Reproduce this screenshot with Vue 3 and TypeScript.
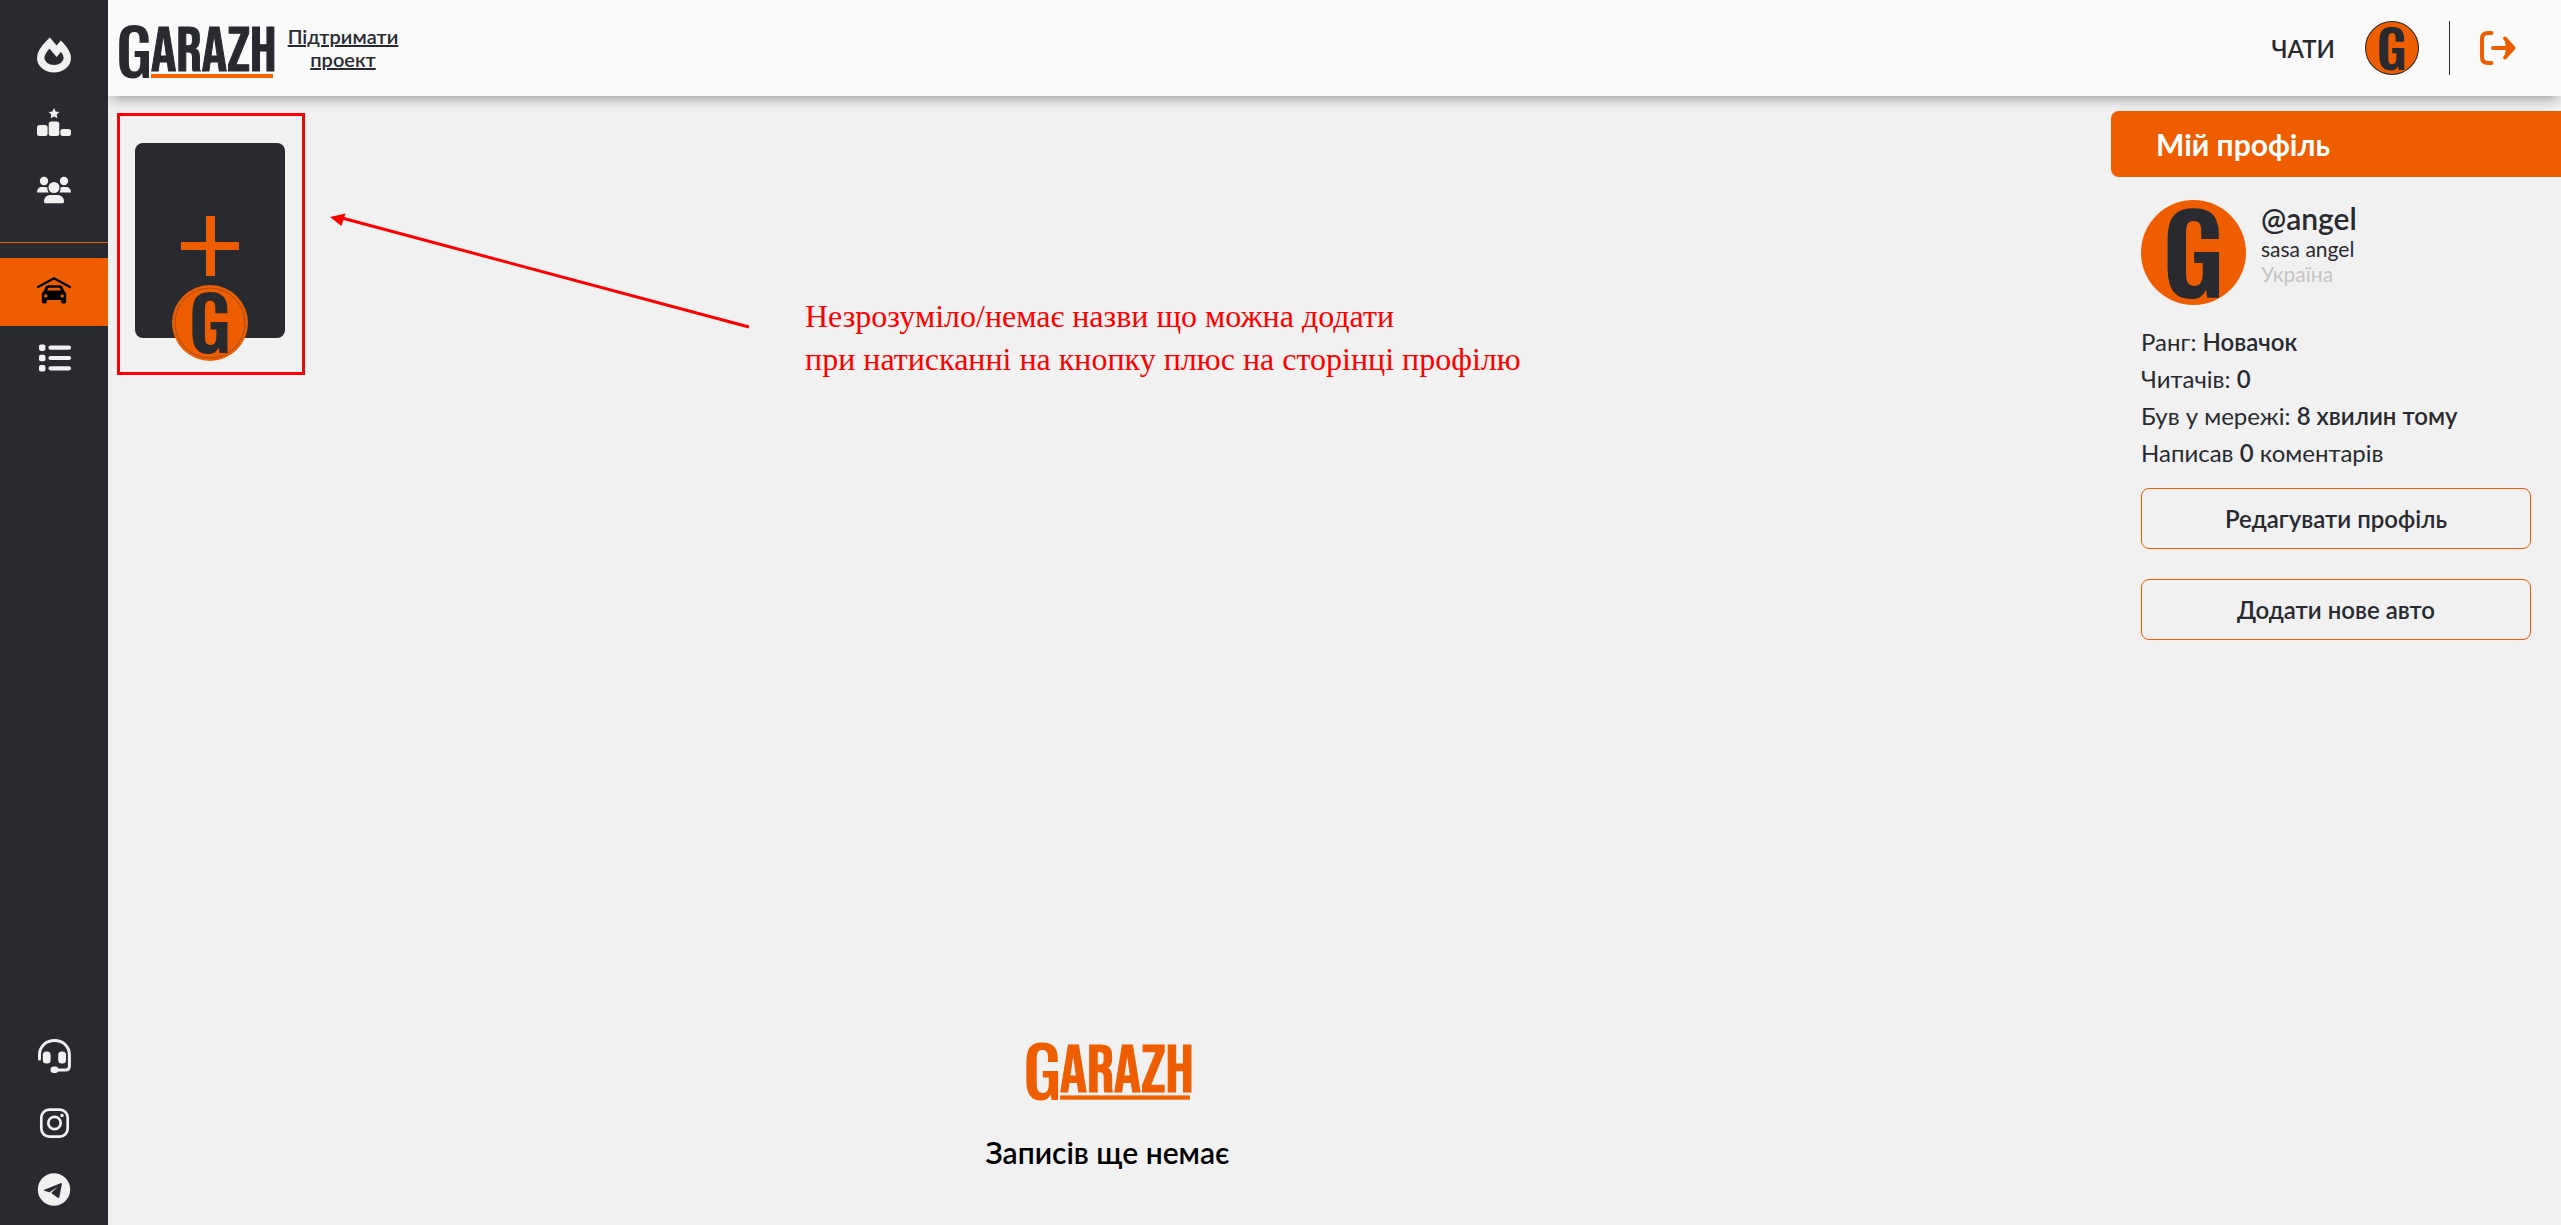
<script setup lang="ts">
interface Fact {
  before: string
  value: string
  after: string
}

const facts: Fact[] = [
  { before: 'Ранг: ', value: 'Новачок', after: '' },
  { before: 'Читачів: ', value: '0', after: '' },
  { before: 'Був у мережі: ', value: '8 хвилин тому', after: '' },
  { before: 'Написав ', value: '0', after: ' коментарів' },
]

const actions: string[] = ['Редагувати профіль', 'Додати нове авто']
</script>

<template>
  <div class="page">
    <nav class="sidebar">
      <div class="group">
        <a class="item" href="#feed" aria-label="Стрічка">
          <svg viewBox="0 0 34 34" fill="none" stroke="#f1f1f1" stroke-width="7.4">
            <path d="M12.6 5C8 9.500 3.700 14.500 3.700 20A13.200 10.600 0 0 0 30.300 20C30.300 15.500 27.500 11.800 24 8L19.600 13.200Z" />
          </svg>
        </a>
        <a class="item" href="#rating" aria-label="Рейтинг">
          <svg viewBox="0 0 34 34" fill="#f1f1f1">
            <path d="M17 3l1.700 3.400 3.600.5-2.600 2.600.7 3.700-3.400-1.800-3.400 1.800.7-3.700L11.700 6.900l3.600-.5z" />
            <rect x="0" y="20" width="10.600" height="11" rx="2.500" />
            <rect x="11.700" y="16.500" width="10.600" height="14.500" rx="2.500" />
            <rect x="23.400" y="24" width="10.600" height="7" rx="2.500" />
          </svg>
        </a>
        <a class="item" href="#people" aria-label="Спільнота">
          <svg viewBox="0 0 34 34" fill="#f1f1f1">
            <circle cx="7" cy="9" r="4.200" />
            <circle cx="27" cy="9" r="4.200" />
            <circle cx="17" cy="15.500" r="5.500" />
            <path d="M0 20.500c0-3.500 2-5.500 5-5.500h3.500c1 0 1.600.2 2 .6-.3 2 .2 3.700 1.200 4.900z" />
            <path d="M34 20.500c0-3.500-2-5.500-5-5.500h-3.500c-1 0-1.600.2-2 .6.3 2-.2 3.700-1.200 4.900z" />
            <path d="M7 29.500c0-4 3-6.500 6.500-6.500h7c3.500 0 6.500 2.500 6.500 6.500 0 1.200-.6 1.800-1.700 1.800H8.700C7.600 31.300 7 30.700 7 29.500z" />
          </svg>
        </a>
      </div>
      <div class="group own">
        <a class="item active" href="#garage" aria-label="Гараж">
          <svg viewBox="0 0 34 34" fill="#000">
            <path d="M1 14L17 5.200 33 14" fill="none" stroke="#000" stroke-width="2.200" stroke-linecap="round" stroke-linejoin="round" />
            <path fill-rule="evenodd" d="M11.500 12.200h11c1.800 0 2.800.8 3.400 2.400l1.300 3.400c1.300.8 2 2 2 3.600v7.200c0 1-.7 1.700-1.600 1.700h-1.800c-1 0-1.700-.7-1.700-1.700V27H9.900v1.800c0 1-.7 1.700-1.700 1.700H6.400c-.9 0-1.600-.7-1.600-1.700v-7.200c0-1.600.7-2.800 2-3.600l1.300-3.400c.6-1.600 1.600-2.400 3.400-2.400zM10.200 17.600h13.600l-.9-2.200c-.2-.5-.5-.7-1-.7h-9.800c-.5 0-.8.2-1 .7zM8.800 21.200a1.700 1.700 0 1 0 0 3.400 1.700 1.700 0 0 0 0-3.400zM25.200 21.200a1.700 1.700 0 1 0 0 3.400 1.700 1.700 0 0 0 0-3.400z" />
          </svg>
        </a>
        <a class="item" href="#list" aria-label="Список">
          <svg viewBox="0 0 34 34" fill="#f1f1f1">
            <rect x="2" y="3.500" width="6.400" height="6.400" rx="1.800" />
            <rect x="2" y="13.800" width="6.400" height="6.400" rx="1.800" />
            <rect x="2" y="24.100" width="6.400" height="6.400" rx="1.800" />
            <path d="M13.500 6.700h18.500M13.500 17h18.500M13.500 27.300h18.500" stroke="#f1f1f1" stroke-width="4.200" stroke-linecap="round" />
          </svg>
        </a>
      </div>
      <div class="group links">
        <a class="item" href="#support" aria-label="Підтримка">
          <svg viewBox="0 0 34 34" fill="#f1f1f1">
            <path d="M2.500 20v-4C2.500 8 8.500 1.600 17.500 1.600S32.400 8 32.400 16v11c0 2.500-1.400 4-4 4H19" fill="none" stroke="#f1f1f1" stroke-width="3" stroke-linecap="round" />
            <rect x="5.800" y="12.500" width="7.800" height="12" rx="3.500" />
            <rect x="21.200" y="12.500" width="7.800" height="12" rx="3.500" />
            <rect x="13.500" y="27.600" width="8" height="6.400" rx="3.200" />
          </svg>
        </a>
        <a class="item" href="#instagram" aria-label="Instagram">
          <svg viewBox="0 0 34 34" fill="none" stroke="#f1f1f1" stroke-width="2.700">
            <rect x="4.300" y="3.600" width="26.400" height="27" rx="8" />
            <circle cx="17.500" cy="17" r="6.200" />
            <circle cx="25" cy="9.500" r="1.700" fill="#f1f1f1" stroke="none" />
          </svg>
        </a>
        <a class="item" href="#telegram" aria-label="Telegram">
          <svg viewBox="0 0 34 34">
            <circle cx="17" cy="16.500" r="16.200" fill="#f1f1f1" />
            <path d="M7.300 16.800L23.600 10.200c.9-.3 1.400.1 1.200 1.200L22.300 24.200c-.2.900-.8 1.100-1.500.6L14.800 20.400c-.4-.3-.4-.7 0-1.100l6-5.400-8 5c-.5.300-1 .3-1.500.1l-4-1.300c-.8-.3-.8-.6 0-.9z" fill="#282a2f" />
          </svg>
        </a>
      </div>
    </nav>

    <div class="content">
      <header class="topbar">
        <a class="brand" href="#home" aria-label="Garazh">
          <svg class="wordmark" viewBox="0 0 156 56">
            <text class="cap" x="-2" y="54">G</text>
            <text class="rest" x="33" y="47">ARAZH</text>
            <rect x="33" y="50" width="122" height="4" />
          </svg>
        </a>
        <a class="support" href="#donate">Підтримати проект</a>
        <a class="chats" href="#chats">ЧАТИ</a>
        <a class="me" href="#me" aria-label="Профіль">
          <svg viewBox="0 0 100 100">
            <circle cx="50" cy="50" r="49" fill="#ee5d00" stroke="#282a2f" stroke-width="2" />
            <text class="mark" x="50" y="91">G</text>
          </svg>
        </a>
        <button class="logout" type="button" aria-label="Вийти">
          <svg viewBox="0 0 36 34" fill="none" stroke="#ee5d00" stroke-width="4" stroke-linecap="round" stroke-linejoin="round">
            <path d="M11.500 2H8Q2 2 2 8V26Q2 32 8 32H11.500M13 17H31" />
            <path d="M24.500 7L34 17L24.500 27L26 17Z" stroke="none" fill="#ee5d00" />
            <path d="M25 7.500L33.500 17L25 26.500" />
          </svg>
        </button>
      </header>

      <div class="columns">
        <main class="feed">
          <button class="add" type="button" aria-label="Додати">
            <svg class="plus" viewBox="0 0 58 60" fill="#ee5d00">
              <rect x="25" y="0" width="9" height="60" />
              <rect x="0" y="26" width="58" height="8" />
            </svg>
            <svg class="badge" viewBox="0 0 100 100">
              <circle cx="50" cy="50" r="50" fill="#ee5d00" />
              <circle cx="50" cy="50" r="46" fill="none" stroke="#8a4a22" stroke-width="1" />
              <text class="mark" x="50" y="90">G</text>
            </svg>
          </button>

          <div class="empty">
            <svg class="wordmark plain" viewBox="0 0 156 56">
              <text class="cap" x="-2" y="54">G</text>
              <text class="rest" x="33" y="47">ARAZH</text>
              <rect x="33" y="50" width="122" height="4" />
            </svg>
            <p>Записів ще немає</p>
          </div>

          <div class="frame"></div>
          <svg class="arrow" viewBox="0 0 420 116">
            <path d="M12 5L419 114" stroke="#f00" stroke-width="3" />
            <path d="M0 4L15.500 0.500L11.500 13Z" fill="#f00" />
          </svg>
          <p class="note">Незрозуміло/немає назви що можна додати<br>при натисканні на кнопку плюс на сторінці профілю</p>
        </main>

        <aside class="profile">
          <h2>Мій профіль</h2>
          <div class="details">
            <div class="person">
              <svg class="avatar" viewBox="0 0 100 100">
                <circle cx="50" cy="50" r="50" fill="#ee5d00" />
                <text class="mark big" x="50" y="93">G</text>
              </svg>
              <div class="names">
                <strong>@angel</strong>
                <span>sasa angel</span>
                <span class="country">Україна</span>
              </div>
            </div>
            <ul class="facts">
              <li v-for="fact in facts" :key="fact.before">{{ fact.before }}<b>{{ fact.value }}</b>{{ fact.after }}</li>
            </ul>
            <div class="actions">
              <button v-for="action in actions" :key="action" type="button">{{ action }}</button>
            </div>
          </div>
        </aside>
      </div>
    </div>
  </div>
</template>

<style>
body {
  background: #f1f1f1;
}
</style>

<style scoped>
.page {
  display: flex;
  min-height: 100vh;
  font-family: Lato, "Open Sans", sans-serif;
  color: #282a2f;
  background: #f1f1f1;
}

.page * {
  box-sizing: border-box;
}

svg {
  display: block;
  overflow: visible;
}

a {
  color: inherit;
}

button {
  font: inherit;
  color: inherit;
  cursor: pointer;
}

.sidebar {
  display: flex;
  flex-direction: column;
  flex: none;
  width: 108px;
  padding: 21px 0 2px;
  background: #282a2f;
  position: relative;
  z-index: 2;
}

.item {
  display: flex;
  align-items: center;
  justify-content: center;
  height: 67px;
}

.item svg {
  width: 34px;
  height: 34px;
}

.own {
  margin-top: 20px;
  padding-top: 15px;
  border-top: 1px solid #ee5d00;
}

.own .item {
  padding-bottom: 4px;
}

.own .active {
  height: 68px;
  background: #ee5d00;
}

.links {
  margin-top: auto;
}

.content {
  display: flex;
  flex-direction: column;
  flex: 1;
  min-width: 0;
}

.topbar {
  display: flex;
  align-items: center;
  height: 96px;
  padding: 0 45px 0 10px;
  background: #fafafa;
  box-shadow: 0 6px 12px -3px rgba(0, 0, 0, 0.35);
  position: relative;
  z-index: 1;
}

.brand {
  padding-top: 8px;
}

.wordmark {
  width: 156px;
  height: 56px;
  fill: #282a2f;
  font-family: "Bebas Neue", Oswald, "Roboto Condensed", sans-serif;
  font-weight: 400;
}

.wordmark .cap {
  font-family: Oswald, "Bebas Neue", "Roboto Condensed", sans-serif;
  font-size: 65px;
  font-weight: 500;
}

.wordmark .rest {
  font-size: 63px;
  stroke: #282a2f;
  stroke-width: 1px;
}

.wordmark rect {
  fill: #f96400;
}

.plain,
.plain rect {
  fill: #ee5d00;
}

.plain .rest {
  stroke: #ee5d00;
}

.mark {
  fill: #282a2f;
  font-family: Oswald, "Bebas Neue", "Roboto Condensed", sans-serif;
  font-size: 98px;
  font-weight: 600;
  text-anchor: middle;
}

.big {
  font-size: 104px;
}

.support {
  width: 112px;
  margin-left: 13px;
  font-size: 20px;
  font-weight: 600;
  line-height: 23px;
  text-align: center;
}

.chats {
  margin-left: auto;
  font-size: 24px;
  font-weight: 600;
  text-decoration: none;
}

.me {
  margin-left: 30px;
}

.me svg {
  width: 54px;
  height: 54px;
}

.logout {
  display: flex;
  align-items: center;
  height: 54px;
  margin-left: 30px;
  padding: 0 0 0 30px;
  border: 0;
  border-left: 1px solid #282a2f;
  background: none;
}

.logout svg {
  width: 36px;
  height: 34px;
}

.columns {
  display: flex;
  flex: 1;
}

.feed {
  display: flex;
  flex-direction: column;
  flex: 1;
  min-width: 0;
  padding: 47px 4px 53px 0;
  position: relative;
}

.add {
  display: flex;
  justify-content: center;
  width: 150px;
  height: 195px;
  margin-left: 27px;
  padding: 73px 0 0;
  border: 0;
  border-radius: 8px;
  background: #282a2f;
  position: relative;
}

.plus {
  width: 58px;
  height: 60px;
}

.badge {
  position: absolute;
  left: 37px;
  bottom: -23px;
  width: 76px;
  height: 76px;
}

.empty {
  display: flex;
  flex-direction: column;
  align-items: center;
  margin-top: auto;
}

.empty .wordmark {
  width: 166px;
  height: 60px;
}

.empty p {
  margin: 30px 0 0;
  font-size: 30px;
  font-weight: 600;
  line-height: 40px;
  color: #000;
}

.frame {
  position: absolute;
  left: 9px;
  top: 17px;
  width: 188px;
  height: 262px;
  border: 3px solid #f00;
}

.arrow {
  position: absolute;
  left: 222px;
  top: 117px;
  width: 420px;
  height: 116px;
}

.note {
  position: absolute;
  left: 697px;
  top: 199px;
  margin: 0;
  font-family: "Liberation Serif", serif;
  font-size: 32px;
  line-height: 43px;
  white-space: nowrap;
  color: #f00;
}

.profile {
  flex: none;
  width: 450px;
  padding-top: 15px;
}

.profile h2 {
  margin: 0;
  padding: 0 45px;
  border-radius: 8px 0 0 8px;
  background: #ee5d00;
  color: #fff;
  font-size: 30px;
  font-weight: 700;
  line-height: 66px;
}

.details {
  padding: 23px 30px 0;
}

.person {
  display: flex;
  gap: 15px;
}

.avatar {
  flex: none;
  width: 105px;
  height: 105px;
}

.names {
  display: flex;
  flex-direction: column;
  font-size: 21px;
  line-height: 25px;
}

.names strong {
  font-size: 30px;
  font-weight: 600;
  line-height: 36px;
}

.country {
  color: #c4c4c4;
}

.facts {
  margin: 18px 0 17px;
  padding: 0;
  list-style: none;
  font-size: 24px;
  line-height: 37px;
}

.facts b {
  font-weight: 600;
}

.actions {
  display: flex;
  flex-direction: column;
  gap: 30px;
}

.actions button {
  height: 61px;
  padding: 0 20px;
  border: 1px solid #ee5d00;
  border-radius: 8px;
  background: none;
  font-size: 24px;
  font-weight: 600;
}
</style>
